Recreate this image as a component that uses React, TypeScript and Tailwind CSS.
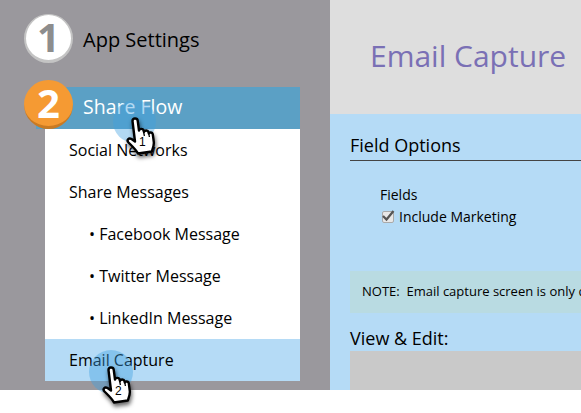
import React from 'react';

const font = { fontFamily: '"Open Sans", sans-serif' };

const HandCursor = ({ label, className }: { label: string; className: string }) => (
  <div className={`absolute w-[30px] h-[38px] ${className}`}>
    <svg width="30" height="38" viewBox="0 0 30 38" className="drop-shadow-[1px_3px_2px_rgba(0,0,0,0.6)]">
      <path
        d="M6.500 4c-.3-3.200 4.800-3.400 5.200-.3L13 13.500c.3-2.200 4.200-2.200 4.600.1l.4 1.400c.5-2 4-2 4.500.2l.3 1.300c.6-1.500 3.600-1.300 4 .8l1 7.700c.4 3.600-.9 6.400-2 9.500L12 36.500c-2-4-6-7.500-9.500-11-2.200-2.300.2-5.200 3-3.500l3.500 2.500z"
        fill="#fff"
        stroke="#000"
        strokeWidth="2.400"
        strokeLinejoin="round"
      />
      <path d="M17.600 15l.8 4M22.800 16.500l.6 3.500" stroke="#000" strokeWidth="1.300" fill="none" />
    </svg>
    <span className="absolute left-[13px] top-[18px] text-[12px] leading-[14px] text-black" style={{ fontFamily: '"Liberation Sans", sans-serif' }}>
      {label}
    </span>
  </div>
);

const StepBadge = ({ n, orange }: { n: string; orange?: boolean }) => (
  <div
    className={`relative z-10 w-[49px] h-[49px] shrink-0 rounded-full flex items-center justify-center text-[40px] font-bold ${
      orange
        ? 'bg-[#f59a33] text-white border-b-[3px] border-[#c97a22]'
        : 'bg-white text-[#8d8d8d] border-b-[3px] border-x-[2px] border-t-[1px] border-[#c4c4c4]'
    }`}
  >
    {n}
  </div>
);

const menuItems = ['Facebook Message', 'Twitter Message', 'LinkedIn Message'];

export default function App() {
  return (
    <div className="relative w-[581px] h-[413px] bg-white overflow-hidden text-black" style={font}>
      <div className="flex h-[390px]">
        {/* Sidebar */}
        <div className="w-[330px] bg-[#9a989d] pt-[13px] pl-[24px]">
          <div className="flex items-center gap-[10px] h-[50px]">
            <StepBadge n="1" />
            <span className="text-[20px] mt-[4px]">App Settings</span>
          </div>
          <div className="mt-[16px] w-[276px] h-[50px] flex items-center relative">
            <div className="absolute left-[12px] right-0 top-[8px] h-[42px] bg-[#5ba0c5]" />
            <StepBadge n="2" orange />
            <span className="relative ml-[10px] mt-[6px] text-[19.5px] font-medium text-white">Share Flow</span>
          </div>
          <div className="ml-[21px] w-[255px] bg-white text-[16px]">
            <div className="h-[42px] pl-[24px] flex items-center">Social Networks</div>
            <div className="h-[42px] pl-[24px] flex items-center">Share Messages</div>
            {menuItems.map((m) => (
              <div key={m} className="h-[42px] pl-[44px] flex items-center">
                • {m}
              </div>
            ))}
            <div className="h-[42px] pl-[24px] flex items-center bg-[#b5dbf6]">Email Capture</div>
          </div>
        </div>

        {/* Main */}
        <div className="flex-1 min-w-0 flex flex-col">
          <div className="h-[114px] bg-[#dedede] pl-[40px] pt-[36px] text-[30px] leading-[40px] text-[#7a70b5] whitespace-nowrap">
            Email Capture
          </div>
          <div className="flex-1 bg-[#b5dbf6] pl-[20px] overflow-hidden">
            <div className="mt-[18px] h-[29px] border-b border-[#444] text-[18px] leading-[26px]">Field Options</div>
            <div className="pl-[30px] mt-[23px] text-[14px] leading-[22px]">
              <div>Fields</div>
              <label className="flex items-center gap-[5px]">
                <span className="w-[12px] h-[12px] ml-[2px] bg-[#e8e8e8] border border-[#aaa] rounded-[2px] flex items-center justify-center">
                  <svg width="14" height="14" viewBox="0 0 14 14" className="-mt-[3px] shrink-0">
                    <path d="M2 7l3.500 3.500L12.500 2" stroke="#555" strokeWidth="2.200" fill="none" />
                  </svg>
                </span>
                Include Marketing
              </label>
            </div>
            <div className="mt-[43px] h-[42px] bg-[#b9dbe2] pl-[12px] flex items-center text-[13px] whitespace-nowrap overflow-hidden">
              NOTE:&nbsp; Email capture screen is only displayed
            </div>
            <div className="mt-[12px] text-[18px] leading-[26px]">View &amp; Edit:</div>
            <div className="h-[39px] bg-[#c9c9c9]" />
          </div>
        </div>
      </div>

      {/* Click markers */}
      <div className="absolute left-[113px] top-[100px] w-[43px] h-[43px] rounded-full bg-[#3f9fe0]/40" />
      <HandCursor label="1" className="left-[126px] top-[117px]" />
      <div className="absolute left-[89px] top-[350px] w-[44px] h-[44px] rounded-full bg-[#3f9fe0]/40" />
      <HandCursor label="2" className="left-[102px] top-[366px]" />
    </div>
  );
}
